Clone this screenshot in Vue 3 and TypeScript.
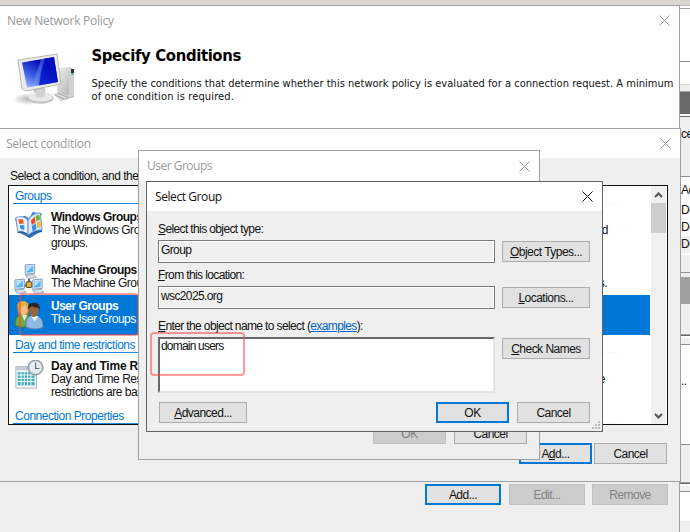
<script setup lang="ts">
interface Band { h: number; kind: string; text?: string }
const bands: Band[] = [
  { h: 2, kind: 'white' }, { h: 1, kind: 'line' }, { h: 52, kind: 'white' }, { h: 1, kind: 'rule' },
  { h: 22, kind: 'white' }, { h: 1, kind: 'pale' }, { h: 6, kind: 'face' }, { h: 1, kind: 'line' },
  { h: 22, kind: 'dark' }, { h: 2, kind: 'white' }, { h: 1, kind: 'dark' }, { h: 9, kind: 'face' },
  { h: 16, kind: 'face', text: 'ce' }, { h: 34, kind: 'face' }, { h: 1, kind: 'rule' }, { h: 5, kind: 'white' },
  { h: 17, kind: 'white', text: 'Ac' }, { h: 3, kind: 'white' }, { h: 17, kind: 'white', text: 'De' },
  { h: 17, kind: 'white', text: 'De' }, { h: 17, kind: 'face', text: 'De' }, { h: 2, kind: 'white' },
  { h: 17, kind: 'face' }, { h: 1, kind: 'rule' }, { h: 4, kind: 'face' }, { h: 27, kind: 'mid' },
  { h: 30, kind: 'face' }, { h: 1, kind: 'line' }, { h: 1, kind: 'dark' }, { h: 2, kind: 'white' }, { h: 6, kind: 'face' },
  { h: 1, kind: 'rule' }, { h: 28, kind: 'white' }, { h: 16, kind: 'white', text: '..' }, { h: 55, kind: 'white' },
  { h: 1, kind: 'rule' }, { h: 37, kind: 'face' }, { h: 1, kind: 'line' }, { h: 1, kind: 'dark' }, { h: 2, kind: 'white' },
  { h: 5, kind: 'face' }, { h: 1, kind: 'rule' }, { h: 29, kind: 'white' }, { h: 30, kind: 'face' },
]
</script>

<template>
  <div class="desktop">
    <div class="console">
      <div class="strip"></div>
      <div class="bands">
        <div v-for="(b, i) in bands" :key="i" class="band" :class="b.kind" :style="{ height: b.h + 'px' }">{{ b.text }}</div>
      </div>
    </div>

    <section class="win policy">
      <header class="bar">
        <span class="caption">New Network Policy</span>
        <svg class="x" viewBox="0 0 11 11"><path d="M.5 .5l10 10M10.5 .5l-10 10" /></svg>
      </header>
      <div class="banner">
        <svg class="computer" viewBox="0 0 66 54">
          <defs>
            <linearGradient id="scr" x1="0" y1="1" x2=".7" y2="0"><stop offset="0" stop-color="#a8c4ff" /><stop offset=".4" stop-color="#3c5fe6" /><stop offset=".8" stop-color="#0009b4" /></linearGradient>
            <linearGradient id="box" x1="0" y1="0" x2="1" y2="1"><stop offset="0" stop-color="#f2f2f2" /><stop offset="1" stop-color="#a5a5a5" /></linearGradient>
            <radialGradient id="shade"><stop offset="0" stop-color="#777" stop-opacity=".55" /><stop offset="1" stop-color="#777" stop-opacity="0" /></radialGradient>
          </defs>
          <ellipse cx="17" cy="46" rx="15" ry="6" fill="url(#shade)" />
          <path d="M47 15l13-1 3 3v27l-13 4-4-4z" fill="url(#box)" />
          <path d="M58 15l5 1v27l-5 2z" fill="#d2d2d2" />
          <path d="M60 16h3v4h-3z" fill="#333" /><path d="M60.5 20h1.500v2h-1.500z" fill="#46a850" />
          <path d="M42 41l10-3 7 4-9 6z" fill="#d6d6d6" /><path d="M44 42l9 4M47 40l9 4M51 39l6 3" stroke="#999" stroke-width=".8" />
          <path d="M22 35l11-3 2 10h-11z" fill="#bdbdbd" />
          <ellipse cx="29.500" cy="45" rx="13" ry="5.800" fill="#c0c0c0" /><ellipse cx="29.500" cy="43.700" rx="12" ry="5" fill="#e9e9e9" /><path d="M25 37l8-2 1 8q-4 3-9 1z" fill="#d2d2d2" />
          <path d="M7 7l39-6 4 30-35 7-4-2z" fill="#ececec" stroke="#aaa" stroke-width=".8" />
          <path d="M11 9.500l32-5.500 4 25-31 5.500z" fill="url(#scr)" />
          <path d="M33 5.700l10-1.700 4 25-19 3.400z" fill="#0010c4" opacity=".75" /><path d="M30 6.300l4-.7-8 27-5 1z" fill="#7f9dff" opacity=".4" />
        </svg>
        <div>
          <h1>Specify Conditions</h1>
          <p class="lead">Specify the conditions that determine whether this network policy is evaluated for a connection request. A minimum</p>
          <p class="lead second">of one condition is required.</p>
        </div>
      </div>
      <footer class="policy-actions">
        <button class="btn primary">Add...</button>
        <button class="btn off">Edit...</button>
        <button class="btn off">Remove</button>
      </footer>
    </section>

    <section class="win condition">
      <header class="bar">
        <span class="caption">Select condition</span>
        <svg class="x" viewBox="0 0 11 11"><path d="M.5 .5l10 10M10.5 .5l-10 10" /></svg>
      </header>
      <p class="prompt">Select a condition, and then</p>
      <div class="list">
        <div class="rows">
          <div class="group first"><span>Groups</span></div>
          <article class="item tall">
            <svg class="icon" viewBox="0 0 32 32">
              <path d="M1 8l11-3 4 3 4-7 10 2-3 5 3 13-13 8-12-6z" fill="#3b82cb" />
              <path d="M2 7q8-3 13 3v16Q9 20 4 22z" fill="#e9f2fc" stroke="#6695c8" /><path d="M15 10q4-8 13-8l2 18q-9 0-15 6z" fill="#d9e9f9" stroke="#6695c8" />
              <path d="M4.500 9l5-.6 1 5-5 .4z" fill="#f05a28" /><path d="M6 15l5 .2v5l-4-1z" fill="#3b91e8" /><path d="M18 10l4-4 1 6-4 3z" fill="#e94b2c" /><path d="M23 5l4-1 1 5-4 2z" fill="#71b52d" /><path d="M19 16l4-3 1 6-4 3z" fill="#388bea" /><path d="M24 12l4-1 1 6-4 1z" fill="#f4bd25" />
              <path d="M4 23q7-2 12 4 6-6 14-5" fill="none" stroke="#275c9b" stroke-width="1.500" />
            </svg>
            <div><h2>Windows Groups</h2><p class="split"><span>The Windows Groups</span><span>d</span></p><p>groups.</p></div>
          </article>
          <article class="item mid-item">
            <svg class="icon" viewBox="0 0 32 32">
              <path d="M16 13v9M7 23h19" stroke="#555" stroke-width="2" /><rect x="13" y="19" width="6" height="6" rx="1" fill="#e6b632" stroke="#333" />
              <g id="pc"><path d="M12 1l10-1v10l-10 1z" fill="#e8eef5" stroke="#7894b6" /><path d="M13.500 2.300l7-.7v7l-7 .7z" fill="#55b4f5" /><path d="M14 2.500l6-.5-6 6z" fill="#b9e2ff" /><path d="M12 12l9-1 3 3-9 2z" fill="#d6deea" stroke="#8195b0" stroke-width=".7" /></g>
              <use href="#pc" x="-11" y="16" /><use href="#pc" x="8" y="16" />
            </svg>
            <div><h2 class="narrow">Machine Groups</h2><p class="split"><span>The Machine Groups</span><span class="stop">s.</span></p></div>
          </article>
          <article class="item picked">
            <svg class="icon" viewBox="0 0 32 32">
              <path d="M1 27q0-11 7-12h5q5 2 5 12-8 4-17 0z" fill="#6fad42" stroke="#447629" /><path d="M8 15l3 7 3-6z" fill="#e9f0cf" />
              <path d="M3 8q0-7 6-7 7 0 7 8l-1 7H5z" fill="#c68c2b" /><ellipse cx="10" cy="10" rx="4.500" ry="6" fill="#f3bd86" /><path d="M5 8q5 0 8-4l2 5V4Q9-2 4 4z" fill="#e0b13d" />
              <path d="M13 29q-1-11 5-12h7q6 2 6 12-8 4-18 0z" fill="#91b9e4" stroke="#567fae" /><path d="M18 17l4 6 4-6z" fill="#e8f3ff" />
              <ellipse cx="21" cy="11" rx="5" ry="7" fill="#9b633b" /><path d="M15 10q-1-7 6-7t7 8l-2-3q-5 0-7-2z" fill="#292421" />
            </svg>
            <div><h2>User Groups</h2><p>The User Groups</p></div>
          </article>
          <div class="group"><span>Day and time restrictions</span></div>
          <article class="item tall day">
            <svg class="icon" viewBox="0 0 32 32">
              <path d="M2 7h22v23H2z" fill="#f4f7f8" stroke="#a7b0b4" /><path d="M2 7h22v4H2z" fill="#c2ccd1" />
              <path d="M4 13h18v14H4z" fill="#3eabc0" /><path d="M4 16h18M4 19.500h18M4 23h18M7.500 13v14M11 13v14M14.500 13v14M18 13v14" stroke="#fff" />
              <circle cx="23" cy="8" r="8" fill="#b9c5cc" stroke="#7a8a94" /><circle cx="23" cy="8" r="6.300" fill="#e7eff4" /><path d="M23 3v6h4" fill="none" stroke="#536b7c" stroke-width="1.200" />
            </svg>
            <div><h2 class="wide">Day and Time Restrictions</h2><p class="split"><span>Day and Time Restric</span><span class="short">e</span></p><p>restrictions are based</p></div>
          </article>
          <div class="group last"><span>Connection Properties</span></div>
        </div>
        <div class="scroll">
          <svg class="arrow" viewBox="0 0 9 8"><path d="M1 6l3.500-3.500L8 6" /></svg>
          <div class="thumb"></div>
          <svg class="arrow" viewBox="0 0 9 8"><path d="M1 2l3.500 3.500L8 2" /></svg>
        </div>
      </div>
      <footer class="condition-actions">
        <button class="btn primary">A<u>d</u>d...</button>
        <button class="btn">Cancel</button>
      </footer>
    </section>

    <div class="mark one"></div>

    <section class="win usergroups">
      <header class="bar">
        <span class="caption">User Groups</span>
        <svg class="x" viewBox="0 0 11 11"><path d="M.5 .5l10 10M10.5 .5l-10 10" /></svg>
      </header>
      <footer class="ug-actions">
        <button class="btn off">OK</button>
        <button class="btn">Cancel</button>
      </footer>
    </section>

    <section class="win picker">
      <header class="bar">
        <span class="caption">Select Group</span>
        <svg class="x" viewBox="0 0 11 11"><path d="M.5 .5l10 10M10.5 .5l-10 10" /></svg>
      </header>
      <div class="form">
        <label class="l1"><u>S</u>elect this object type:</label>
        <div class="line"><div class="field">Group</div><button class="btn side"><u>O</u>bject Types...</button></div>
        <label class="l2"><u>F</u>rom this location:</label>
        <div class="line"><div class="field">wsc2025.org</div><button class="btn side"><u>L</u>ocations...</button></div>
        <label class="l3"><u>E</u>nter the object name to select (<a>examples</a>):</label>
        <div class="line"><div class="area">domain users</div><button class="btn side"><u>C</u>heck Names</button></div>
        <div class="final"><button class="btn adv"><u>A</u>dvanced...</button><button class="btn primary">OK</button><button class="btn">Cancel</button></div>
      </div>
      <svg class="grip" viewBox="0 0 8 8"><path d="M6 0h2v2H6zM3 3h2v2H3zM6 3h2v2H6zM0 6h2v2H0zM3 6h2v2H3zM6 6h2v2H6z" /></svg>
    </section>
    <div class="mark two"></div>
  </div>
</template>

<style>
body { margin: 0; overflow: hidden; }
</style>
<style scoped>
* { box-sizing: border-box; }
.desktop { position: relative; width: 690px; height: 532px; overflow: hidden; background: #efefef; font: 12px/13px "Liberation Sans", Arial, sans-serif; letter-spacing: -0.48px; color: #111; white-space: nowrap; }
h1, h2, p { margin: 0; }
.strip { height: 6px; background: #dad6d1; border-bottom: 1px solid #c3b4a8; }
.bands { margin-left: 680px; }
.band { overflow: hidden; padding-left: 1px; line-height: 17px; }
.white { background: #fff; }
.face { background: #efefef; }
.band.line, .mid { background: #a0a0a0; }
.rule { background: #8c8f98; }
.pale { background: #d9d9d9; }
.dark { background: #696969; }
.win { position: absolute; display: flex; flex-direction: column; background: #efefef; border: 1px solid #a0a0a0; }
.policy { left: -1px; top: 5px; width: 681px; height: 540px; }
.condition { left: -1px; top: 128px; width: 682px; height: 354px; }
.usergroups { left: 138px; top: 150px; width: 402px; height: 310px; }
.picker { left: 146px; top: 181px; width: 457px; height: 251px; border-color: #636363; letter-spacing: -0.62px; }
.bar { display: flex; align-items: center; justify-content: space-between; flex: none; height: 29px; padding: 0 9px 0 8px; background: #fff; color: #999; font: 12px/16px "Open Sans", "Noto Sans", sans-serif; letter-spacing: -0.25px; }
.policy .bar { padding-left: 7px; }
.condition .bar { padding-left: 6px; }
.usergroups .bar { height: 30px; letter-spacing: -0.5px; }
.picker .bar { color: #111; letter-spacing: -0.42px; }
.x { width: 11px; height: 11px; fill: none; stroke: currentColor; stroke-width: 1; }
.banner { display: flex; flex: none; height: 93px; background: #fff; }
.computer { width: 66px; height: 54px; margin: 18px 14.5px 0 11px; flex: none; }
h1 { margin-top: 10px; font: bold 16.5px/22px "DejaVu Sans Condensed", "DejaVu Sans", sans-serif; letter-spacing: -0.35px; color: #000; }
.lead { margin-top: 10px; font: 11px/13px "DejaVu Sans Condensed", "DejaVu Sans", sans-serif; letter-spacing: 0.03px; }
.lead.second { margin-top: 0; letter-spacing: 0.13px; }
.policy-actions { display: flex; gap: 8px; margin: 356px 0 0 425px; }
.policy-actions .btn { width: 76px; }
.policy-actions .btn:last-child { margin-left: -1px; }
.btn { flex: none; width: 73px; height: 21px; padding: 0; border: 1px solid #adadad; background: #e1e1e1; font: inherit; letter-spacing: -0.52px; color: #111; text-align: center; line-height: 18px; }
.btn.primary { border: 2px solid #0078d7; line-height: 16px; }
.btn.off { border-color: #bfbfbf; background: #ccc; color: #838383; }
u { text-underline-offset: 1px; text-decoration-thickness: 1px; }
.prompt { margin: 12px 0 0 10px; }
.list { display: flex; flex: none; width: 660px; height: 240px; margin: 2px 0 0 8px; border: 1px solid #111; background: #fff; }
.rows { width: 642px; }
.group { height: 18px; padding: 4px 0 0 6px; color: #0078d7; background: linear-gradient(90deg, #0078d7, #3c9be8 30%, #fff 96%) 4px 17px / 640px 1px no-repeat; }
.item { display: flex; gap: 7px; padding: 7px 0 0 5px; height: 53px; }
.icon { width: 30px; height: 30px; flex: none; }
.mid-item { height: 38px; }
.item h2 { font-size: 12px; line-height: 13px; letter-spacing: -0.5px; }
.item h2.narrow { letter-spacing: -0.6px; }
.item h2.wide { letter-spacing: -0.2px; }
.split { display: flex; justify-content: space-between; width: 557px; }
.short { margin-right: 3px; }
.stop { margin-right: 1px; }
.picked { height: 40px; width: 641px; background: #0078d7; color: #fff; padding-top: 5px; }
.scroll { display: flex; flex-direction: column; align-items: center; width: 15px; background: #f0f0f0; }
.arrow { width: 9px; height: 8px; margin: 5px 0 4px; fill: none; stroke: #555; stroke-width: 2; }
.thumb { width: 15px; height: 30px; margin-bottom: auto; background: #cdcdcd; }
.condition-actions { display: flex; gap: 2px; margin: 18px 0 0 519px; }
.ug-actions { display: flex; gap: 8px; margin: 242px 0 0 234px; }
.form { padding: 12px 12px 0 11px; }
label { display: block; height: 13px; }
.line { display: flex; gap: 7px; }
.side { width: 88px; margin-top: 1px; }
.field { width: 337px; height: 23px; border: 1px solid #7a7a7a; box-shadow: inset 0 0 0 1px #fff; padding: 3px 2px; }
.l1 { margin-bottom: 4px; }
.l2 { margin: 6px 0 4px; }
.l3 { margin: 11px 0 4px; }
.area { width: 337px; height: 56px; background: #fff; border: 2px solid; border-color: #696969 #e3e3e3 #e3e3e3 #696969; padding: 1px; letter-spacing: -0.8px; }
.final { display: flex; gap: 8px; padding: 9px 0 0 1px; }
.adv { width: 88px; margin-right: 181px; }
a { color: #0066cc; text-decoration: underline; text-underline-offset: 1px; }
.grip { position: absolute; right: 2px; bottom: 2px; width: 8px; height: 8px; fill: #bcbcbc; }
.mark { position: absolute; border: 2px solid rgba(250, 70, 70, .55); border-radius: 4px; }
.mark.one { left: 19px; top: 293px; width: 120px; height: 43px; }
.mark.two { left: 150px; top: 332px; width: 95px; height: 44px; }
</style>
